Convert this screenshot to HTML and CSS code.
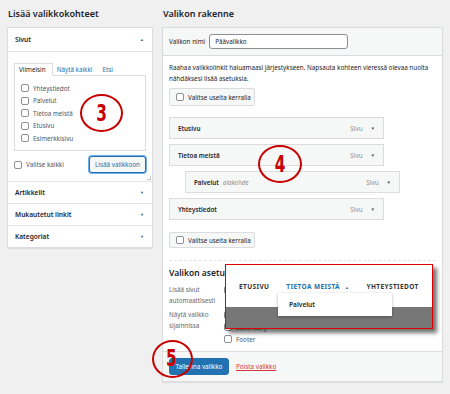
FILE: index.html
```html
<!DOCTYPE html>
<html>
    <head>
        <title>Valikot</title>
        <meta name="viewport" content="width=device-width, initial-scale=1.0">
        <link rel="stylesheet" href="styles.css">
    </head>
    <body>
        <div class="page">
            <!-- Left column: add menu items -->
            <div class="col-left">
                <h2 class="col-title">Lisää valikkokohteet</h2>
                <div class="acc">
                    <div class="acc-head open">Sivut <span class="arrow">&#9650;</span></div>
                    <div class="acc-body">
                        <div class="tabs">
                            <span class="tab active">Viimeisin</span>
                            <span class="tab">Näytä kaikki</span>
                            <span class="tab">Etsi</span>
                        </div>
                        <div class="tab-panel">
                            <label class="check-row"><span class="cb"></span>Yhteystiedot</label>
                            <label class="check-row"><span class="cb"></span>Palvelut</label>
                            <label class="check-row"><span class="cb"></span>Tietoa meistä</label>
                            <label class="check-row"><span class="cb"></span>Etusivu</label>
                            <label class="check-row"><span class="cb"></span>Esimerkkisivu</label>
                        </div>
                        <div class="acc-actions">
                            <label class="check-row"><span class="cb"></span>Valitse kaikki</label>
                            <button class="btn-outline">Lisää valikkoon</button>
                        </div>
                        <span class="grip"></span>
                    </div>
                    <div class="acc-head">Artikkelit <span class="arrow">&#9660;</span></div>
                    <div class="acc-head">Mukautetut linkit <span class="arrow">&#9660;</span></div>
                    <div class="acc-head">Kategoriat <span class="arrow">&#9660;</span></div>
                </div>
            </div>

            <!-- Right column: menu structure -->
            <div class="col-right">
                <h2 class="col-title">Valikon rakenne</h2>
                <div class="menu-box">
                    <div class="menu-head">
                        <span class="label">Valikon nimi</span>
                        <span class="text-input">Päävalikko</span>
                    </div>
                    <div class="menu-body">
                        <p class="hint">Raahaa valikkolinkit haluamaasi järjestykseen. Napsauta kohteen vieressä olevaa nuolta nähdäksesi lisää asetuksia.</p>
                        <div class="btn-select"><span class="cb"></span>Valitse useita kerralla</div>

                        <ul class="items">
                            <li class="item"><b>Etusivu</b><span class="type">Sivu</span><span class="caret">&#9660;</span></li>
                            <li class="item"><b>Tietoa meistä</b><span class="type">Sivu</span><span class="caret">&#9660;</span></li>
                            <li class="item sub"><b>Palvelut</b><i>alakohde</i><span class="type">Sivu</span><span class="caret">&#9660;</span></li>
                            <li class="item"><b>Yhteystiedot</b><span class="type">Sivu</span><span class="caret">&#9660;</span></li>
                        </ul>

                        <div class="btn-select small"><span class="cb"></span>Valitse useita kerralla</div>

                        <div class="settings">
                            <h3>Valikon asetukset</h3>
                            <div class="set-row">
                                <span class="set-label">Lisää sivut automaattisesti</span>
                                <div class="set-opts">
                                    <label class="check-row"><span class="cb"></span></label>
                                </div>
                            </div>
                            <div class="set-row">
                                <span class="set-label">Näytä valikko sijainnissa</span>
                                <div class="set-opts">
                                    <label class="check-row"><span class="cb checked"></span></label>
                                    <label class="check-row"><span class="cb"></span>Secondary</label>
                                    <label class="check-row"><span class="cb"></span>Footer</label>
                                </div>
                            </div>
                        </div>
                    </div>
                    <div class="menu-foot">
                        <button class="btn-primary">Tallenna valikko</button>
                        <a class="delete">Poista valikko</a>
                    </div>

                    <!-- preview overlay -->
                    <div class="preview">
                        <div class="preview-nav">
                            <span>ETUSIVU</span>
                            <span class="current">TIETOA MEISTÄ <small>&#9650;</small></span>
                            <span>YHTEYSTIEDOT</span>
                        </div>
                        <div class="preview-drop">Palvelut</div>
                    </div>
                </div>
            </div>
        </div>

        <!-- numbered callouts -->
        <div class="mark mark-3"><span>3</span></div>
        <div class="mark mark-4"><span>4</span></div>
        <div class="mark mark-5"><span>5</span></div>
    </body>
</html>
```

FILE: styles.css
```css
/* ---- General ---- */
* {
    box-sizing: border-box;
    font-family: "Noto Sans", "Open Sans", sans-serif;
}

body {
    background-color: #f0f0f1;
    color: #1d2327;
    font-size: 6.3px;
    margin: 0;
    position: relative;
    height: 394px;
    overflow: hidden;
}

.page {
    display: flex;
    gap: 9px;
    padding: 8px 7px 0 7px;
}

.col-left {
    width: 146px;
}

.col-right {
    width: 281px;
}

.col-title {
    font-size: 9px;
    font-weight: 600;
    line-height: 12px;
    margin: 0 1px 7px;
}

.cb {
    background-color: #fff;
    border: 1px solid #8c8f94;
    border-radius: 2px;
    display: inline-block;
    flex: none;
    height: 8px;
    margin-right: 4px;
    position: relative;
    width: 8px;
}

.cb.checked::after {
    border-bottom: 1.5px solid #2271b1;
    border-right: 1.5px solid #2271b1;
    content: "";
    height: 5px;
    left: 2px;
    position: absolute;
    top: 0px;
    transform: rotate(40deg);
    width: 2px;
}

.check-row {
    align-items: center;
    color: #50575e;
    display: flex;
    height: 12.5px;
    white-space: nowrap;
}


/* ---- Left accordion ---- */
.acc {
    background-color: #fff;
    border: 1px solid #dcdcde;
    box-shadow: 0 1px 1px rgba(0, 0, 0, 0.08);
}

.acc-head {
    align-items: center;
    border-top: 1px solid #e4e4e4;
    display: flex;
    font-size: 6.6px;
    font-weight: 600;
    height: 22px;
    justify-content: space-between;
    padding: 0 8px 0 7px;
}

.acc-head.open {
    border-top: 0;
    border-bottom: 1px solid #e4e4e4;
    height: 24px;
}

.arrow {
    color: #50575e;
    font-size: 4px;
}

.acc-body {
    padding: 11px 6px 8px 6px;
    position: relative;
}

.tabs {
    display: flex;
    height: 13px;
    margin-bottom: -1px;
    position: relative;
}

.tab {
    align-items: center;
    color: #2271b1;
    display: flex;
    padding: 0 6px 0 4px;
}

.tab.active {
    background-color: #fff;
    border: 1px solid #dcdcde;
    border-bottom-color: #fff;
    color: #1d2327;
}

.tab-panel {
    border: 1px solid #dcdcde;
    height: 76px;
    padding: 6px 6px;
}

.acc-actions {
    align-items: center;
    display: flex;
    justify-content: space-between;
    margin-top: 5px;
}

.btn-outline {
    background-color: #f6f7f7;
    border: 1px solid #2271b1;
    border-radius: 3px;
    box-shadow: 0 0 0 1px #72aee6;
    color: #2271b1;
    font-size: 6.3px;
    height: 17px;
    padding: 0 3px;
    white-space: nowrap;
    width: 57px;
}

.grip {
    border-bottom: 1px solid #c3c4c7;
    border-right: 1px solid #c3c4c7;
    bottom: 1px;
    height: 4px;
    position: absolute;
    right: 1px;
    width: 4px;
}


/* ---- Right menu structure ---- */
.menu-box {
    background-color: #fff;
    border: 1px solid #dcdcde;
    box-shadow: 0 1px 1px rgba(0, 0, 0, 0.06);
    position: relative;
}

.menu-head {
    align-items: center;
    background-color: #f6f7f7;
    border-bottom: 1px solid #dcdcde;
    display: flex;
    height: 28px;
    padding: 0 6px;
}

.text-input {
    align-items: center;
    background-color: #fff;
    border: 1px solid #8c8f94;
    border-radius: 3px;
    display: flex;
    height: 15px;
    margin-left: 4px;
    padding: 0 5px;
    width: 139px;
}

.menu-body {
    padding: 6px 6px 0;
}

.hint {
    line-height: 11px;
    margin: 0;
    width: 266px;
}

.btn-select {
    align-items: center;
    background-color: #f6f7f7;
    border: 1px solid #dcdcde;
    border-radius: 2px;
    display: flex;
    height: 18px;
    margin-top: 4px;
    padding: 0 5px 0 6px;
    white-space: nowrap;
    width: 86px;
}

.btn-select.small {
    height: 16px;
    margin-top: 12px;
}

.items {
    list-style: none;
    margin: 11px 0 0;
    padding: 0;
}

.item {
    align-items: center;
    background-color: #f6f7f7;
    border: 1px solid #dcdcde;
    display: flex;
    height: 22px;
    margin-bottom: 5px;
    padding: 0 8px;
    width: 215px;
}

.item.sub {
    margin-left: 16px;
}

.item b {
    font-weight: 600;
}

.item i {
    color: #8c8f94;
    margin-left: 4px;
}

.item .type {
    color: #8c8f94;
    margin-left: auto;
}

.item .caret {
    color: #50575e;
    font-size: 4.5px;
    margin-left: 8px;
}

.settings {
    border-top: 1px dashed #e4e4e4;
    margin-top: 12px;
    padding-top: 6px;
}

.settings h3 {
    font-size: 8.5px;
    font-weight: 600;
    line-height: 12px;
    margin: 0 0 5px;
}

.set-row {
    display: flex;
    margin-bottom: 3px;
}

.set-label {
    color: #646970;
    line-height: 11px;
    width: 55px;
}

.set-opts .check-row {
    height: 12px;
}

.menu-foot {
    align-items: center;
    background-color: #f6f7f7;
    border-top: 1px solid #dcdcde;
    display: flex;
    height: 30px;
    margin-top: 6px;
    padding: 0 6px;
}

.btn-primary {
    background-color: #2271b1;
    border: 1px solid #2271b1;
    border-radius: 3px;
    color: #fff;
    font-size: 6.3px;
    height: 17px;
    padding: 0 3px;
    white-space: nowrap;
    width: 60px;
}

.delete {
    color: #d63638;
    margin-left: 7px;
    text-decoration: underline;
}


/* ---- Preview overlay ---- */
.preview {
    background-color: #777;
    border: 1px solid #d00;
    box-shadow: 4px 4px 4px rgba(0, 0, 0, 0.55);
    height: 65px;
    left: 62px;
    position: absolute;
    top: 236px;
    width: 208px;
}

.preview-nav {
    align-items: center;
    background-color: #fff;
    display: flex;
    gap: 17px;
    height: 42px;
    padding: 0 0 0 13px;
}

.preview-nav span {
    color: #333;
    font-size: 6.5px;
    font-weight: 700;
    letter-spacing: 0.4px;
}

.preview-nav .current {
    color: #2271b1;
}

.preview-nav small {
    font-size: 4px;
    margin-left: 3px;
}

.preview-drop {
    align-items: center;
    background-color: #fff;
    box-shadow: 0 1px 3px rgba(0, 0, 0, 0.3);
    display: flex;
    font-size: 6.6px;
    font-weight: 600;
    height: 23px;
    left: 52px;
    padding-left: 11px;
    position: absolute;
    top: 28px;
    width: 114px;
}


/* ---- Numbered callouts ---- */
.mark {
    align-items: center;
    border: 2px solid #c80000;
    border-radius: 50%;
    display: flex;
    justify-content: center;
    position: absolute;
}

.mark span {
    color: #c80000;
    font-family: "DejaVu Sans Condensed", "Liberation Sans Narrow", sans-serif;
    font-size: 17px;
    font-weight: 700;
    transform: scaleY(1.35);
}

.mark-3 {
    height: 38px;
    left: 80px;
    top: 94px;
    width: 43px;
}

.mark-4 {
    height: 38px;
    left: 258px;
    top: 145px;
    width: 44px;
}

.mark-5 {
    align-items: flex-start;
    height: 38px;
    justify-content: flex-start;
    left: 152px;
    top: 340px;
    width: 41px;
}

.mark-5 span {
    margin: 6px 0 0 12px;
}
```
